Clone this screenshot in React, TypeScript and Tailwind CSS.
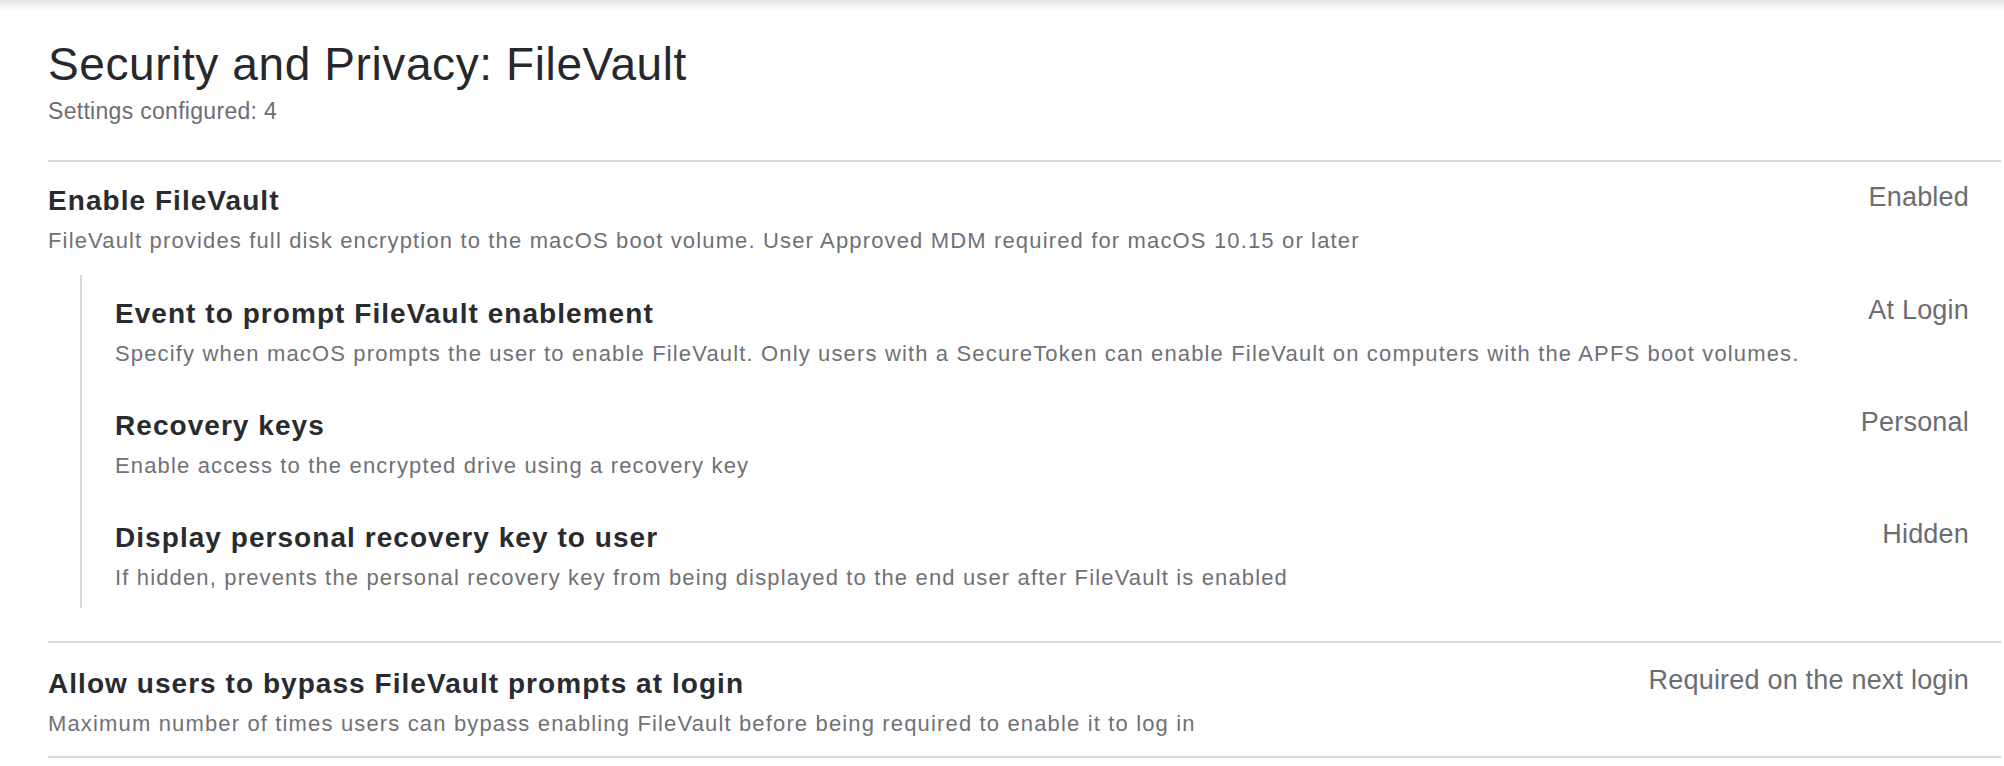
import React from 'react'

interface Setting {
  title: string
  description: string
  value: string
}

const topSetting: Setting = {
  title: 'Enable FileVault',
  description:
    'FileVault provides full disk encryption to the macOS boot volume. User Approved MDM required for macOS 10.15 or later',
  value: 'Enabled',
}

const nestedSettings: Setting[] = [
  {
    title: 'Event to prompt FileVault enablement',
    description:
      'Specify when macOS prompts the user to enable FileVault. Only users with a SecureToken can enable FileVault on computers with the APFS boot volumes.',
    value: 'At Login',
  },
  {
    title: 'Recovery keys',
    description: 'Enable access to the encrypted drive using a recovery key',
    value: 'Personal',
  },
  {
    title: 'Display personal recovery key to user',
    description:
      'If hidden, prevents the personal recovery key from being displayed to the end user after FileVault is enabled',
    value: 'Hidden',
  },
]

const bypassSetting: Setting = {
  title: 'Allow users to bypass FileVault prompts at login',
  description:
    'Maximum number of times users can bypass enabling FileVault before being required to enable it to log in',
  value: 'Required on the next login',
}

function SettingRow({ setting }: { setting: Setting }) {
  return (
    <div className="flex items-start pr-[32px]">
      <div className="flex-1 min-w-0 pt-[4px]">
        <h3 className="text-[28px] leading-[34px] font-bold tracking-[1.05px] text-[#2a2b2f]">
          {setting.title}
        </h3>
        <p className="mt-[9px] text-[22px] leading-[28px] tracking-[1.15px] text-[#6f7176]">
          {setting.description}
        </p>
      </div>
      <div className="flex-none pl-6 text-right whitespace-nowrap text-[27px] leading-[34px] tracking-[0.2px] text-[#6b6d72]">
        {setting.value}
      </div>
    </div>
  )
}

export default function App() {
  return (
    <div className="min-h-screen bg-white font-['Liberation_Sans',Arial,sans-serif]">
      {/* Header shadow */}
      <div className="h-[12px] bg-linear-to-b from-[#e4e4e4] via-[#f4f4f4] to-white" />

      <div className="pl-[48px] pr-[3px] pt-[24px]">
        {/* Header */}
        <h1 className="text-[46px] leading-[56px] tracking-[0.6px] text-[#27282c]">
          Security and Privacy: FileVault
        </h1>
        <p className="mt-[5px] text-[23px] leading-[28px] tracking-[0.3px] text-[#6c6e72]">
          Settings configured: 4
        </p>

        {/* FileVault section */}
        <div className="mt-[35px] border-t-2 border-[#dadada] pt-[18px]">
          <SettingRow setting={topSetting} />

          <div className="mt-[20px] ml-[32px] border-l-2 border-[#d8d8d8] pl-[33px] pt-[18px] pb-[16px] flex flex-col gap-[37px]">
            {nestedSettings.map((s) => (
              <SettingRow key={s.title} setting={s} />
            ))}
          </div>
        </div>

        {/* Bypass section */}
        <div className="mt-[33px] border-t-2 border-b-2 border-[#dadada] pt-[20px] pb-[18px]">
          <SettingRow setting={bypassSetting} />
        </div>
      </div>
    </div>
  )
}
